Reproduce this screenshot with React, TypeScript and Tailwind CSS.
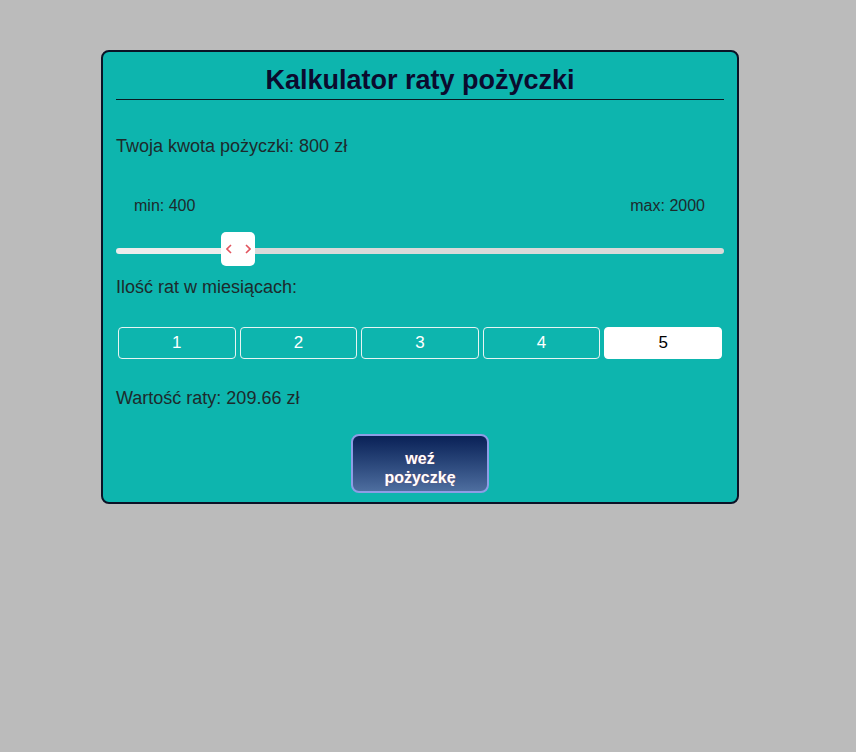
import { useState } from 'react'

const MIN = 400
const MAX = 2000

export default function App() {
  const [amount] = useState(800)
  const [months, setMonths] = useState(5)
  const rate = 209.66

  return (
    <div className="min-h-[752px] bg-[#bbbbbb] pt-[50px] font-['Liberation_Sans',Arial,sans-serif]">
      <div className="ml-[101px] w-[638px] rounded-[8px] border-2 border-[#0a1226] bg-[#0db5ae] px-[13px] pb-[9px] pt-[13px]">
        {/* Header */}
        <h1 className="text-center text-[27px] font-bold leading-[31px] text-[#0b0b2e]">
          Kalkulator raty pożyczki
        </h1>
        <div className="mt-[3px] h-px bg-[#0a1a22]" />

        <p className="mt-[36px] text-[18px] leading-[21px] text-[#1d2a2c]">
          Twoja kwota pożyczki: {amount} zł
        </p>

        {/* Slider */}
        <div className="mt-[40px] flex justify-between pl-[18px] pr-[19px] text-[16px] leading-[18px] text-[#1d2a2c]">
          <span>min: {MIN}</span>
          <span>max: {MAX}</span>
        </div>
        <div className="relative mt-[17px] h-[34px]">
          <div className="absolute left-0 right-0 top-[16px] flex h-[6px] overflow-hidden rounded-full">
            <div className="w-[110px] bg-[#ececec]" />
            <div className="flex-1 bg-[#d9d9d9]" />
          </div>
          <div className="absolute left-[105px] top-0 flex h-[34px] w-[34px] items-center justify-center gap-[13px] rounded-[5px] bg-white">
            <svg width="6" height="10" viewBox="0 0 6 10" fill="none" stroke="#e2545e" strokeWidth="1.6">
              <path d="M5 1 1 5l4 4" />
            </svg>
            <svg width="6" height="10" viewBox="0 0 6 10" fill="none" stroke="#e2545e" strokeWidth="1.6">
              <path d="M1 1l4 4-4 4" />
            </svg>
          </div>
        </div>

        <p className="mt-[11px] text-[18px] leading-[21px] text-[#1d2a2c]">
          Ilość rat w miesiącach:
        </p>

        {/* Months */}
        <div className="mt-[29px] flex gap-[4px] px-[2px]">
          {[1, 2, 3, 4, 5].map((m) => (
            <button
              key={m}
              onClick={() => setMonths(m)}
              className={
                m === months
                  ? 'h-[32px] flex-1 rounded-[4px] border border-white bg-white text-[17px] text-black'
                  : 'h-[32px] flex-1 rounded-[4px] border border-[#e8f4f3] text-[17px] text-white'
              }
            >
              {m}
            </button>
          ))}
        </div>

        <p className="mt-[29px] text-[18px] leading-[21px] text-[#1d2a2c]">
          Wartość raty: {rate.toFixed(2)} zł
        </p>

        <div className="mt-[25px] flex justify-center">
          <button className="flex h-[59px] w-[138px] flex-col items-center justify-center rounded-[8px] border-2 border-[#8d9de6] bg-gradient-to-b from-[#0a2157] to-[#4e6e9f] pt-[8px] text-[16px] font-bold leading-[19px] text-white [text-shadow:0_0_1px_rgba(255,80,80,0.5)]">
            <span>weź</span>
            <span>pożyczkę</span>
          </button>
        </div>
      </div>
    </div>
  )
}
